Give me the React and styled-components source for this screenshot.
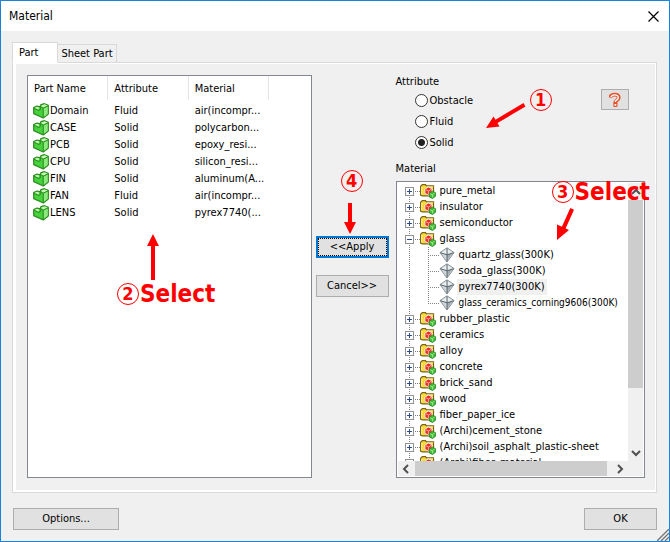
import { useState } from "react"
import styled, { createGlobalStyle, css } from "styled-components"

const parts = [
  { name: "Domain", attribute: "Fluid", material: "air(incompr..." },
  { name: "CASE", attribute: "Solid", material: "polycarbon..." },
  { name: "PCB", attribute: "Solid", material: "epoxy_resi..." },
  { name: "CPU", attribute: "Solid", material: "silicon_resi..." },
  { name: "FIN", attribute: "Solid", material: "aluminum(A..." },
  { name: "FAN", attribute: "Fluid", material: "air(incompr..." },
  { name: "LENS", attribute: "Solid", material: "pyrex7740(..." },
]

const materials = [
  { name: "pure_metal" },
  { name: "insulator" },
  { name: "semiconductor" },
  {
    name: "glass",
    children: [
      "quartz_glass(300K)",
      "soda_glass(300K)",
      "pyrex7740(300K)",
      "glass_ceramics_corning9606(300K)",
    ],
  },
  { name: "rubber_plastic" },
  { name: "ceramics" },
  { name: "alloy" },
  { name: "concrete" },
  { name: "brick_sand" },
  { name: "wood" },
  { name: "fiber_paper_ice" },
  { name: "(Archi)cement_stone" },
  { name: "(Archi)soil_asphalt_plastic-sheet" },
  { name: "(Archi)fiber_material" },
]

const PartIcon = () => (
  <svg width="16" height="16" viewBox="0 0 16 16" aria-hidden="true">
    <path d="M.7 4.6 4 3l3 .8L8 1.6 11.500.7l3.800 1.600v8.700L10.300 15 .7 10.600z" fill="#45d23c" stroke="#2c8a1e" strokeWidth="1.200" strokeLinejoin="round" />
    <path d="M7.600 3 11.400 1.300l3.500 1.400-4.400 2z" fill="#c4f5b4" />
    <path d="M1.300 4.900 4 3.700l2.600 1.100-1.200 1.800z" fill="#c4f5b4" />
    <path d="M10.600 5.400 14.700 3.400v7.300l-4.100 3.300z" fill="#8fe87f" />
    <path d="M10.200 5.200v9.400M7.300 3.400v3.400L5.400 7.400 1 5.200M7.300 3.400l2.900 1.800 4.900-2.400" fill="none" stroke="#2c8a1e" />
  </svg>
)

const FolderIcon = () => (
  <svg width="16" height="16" viewBox="0 0 16 16" aria-hidden="true">
    <path d="M.6 3.400 2.300 1.600h3.200l1 1.200h7v10H2.400L.6 12z" fill="#f5d93c" stroke="#7a6114" strokeWidth="1.200" />
    <path d="M7 3.900h6.200M1.700 4v7.400" fill="none" stroke="#fff3a0" />
    <path d="m4.900 6.300 3.400-2.300 3.700 1.600v4.200L8.600 12.200 4.900 10.400z" fill="#ea3328" stroke="#fff" strokeWidth=".8" />
    <path d="m5.900 6.900 2.700 1.200 2.600-1.700M8.600 8.300v3" fill="none" stroke="#ffb3a8" strokeWidth=".9" />
    <path d="m9.300 10.300 3-2.100 3.200 1.400v3.700l-3 2.200-3.200-1.500z" fill="#3fb932" stroke="#1f8a1c" strokeWidth=".8" />
    <path d="m10.100 10.800 2.300 1 2.300-1.600M12.400 11.900v2.500" fill="none" stroke="#c0f4b0" strokeWidth=".8" />
  </svg>
)

const GemIcon = () => (
  <svg width="16" height="16" viewBox="0 0 16 16" aria-hidden="true">
    <path d="M8 .8 15 5.600 8 15 1 5.600z" fill="#d3d9dc" stroke="#89939a" strokeLinejoin="round" />
    <path d="M8 1.800 13.600 5.600 8 7.600 2.400 5.600z" fill="#eceff0" />
    <path d="M8 7.800 13.600 6.200 8 13.800z" fill="#a3aeb4" />
    <path d="M1.400 5.700 8 7.800l6.600-2.100M8 1.200v13.400" fill="none" stroke="#59646a" />
  </svg>
)

const HelpIcon = () => (
  <svg width="12" height="16" viewBox="0 0 12 16" aria-hidden="true">
    <path d="M1.300 5.600C1.500 3.400 3.200 2.600 5.800 2.600s3.900 1.100 3.900 3.100c0 2.500-3.300 2.300-3.300 5.200" fill="none" stroke="#e4532c" strokeWidth="3.800" />
    <rect x="4.300" y="10.400" width="4.200" height="4.600" rx="1" fill="#e4532c" />
    <path d="M2 5C2.500 3.400 3.800 2.900 5.800 2.900s3.500 1 3.500 2.800c0 2.200-3 2.100-3 4.300" fill="none" stroke="#fff" strokeWidth="1.400" />
    <rect x="5.500" y="12" width="1.800" height="1.800" fill="#fff" />
  </svg>
)

const chevrons = {
  up: "M1 7 5 3l4 4",
  down: "M1 3l4 4 4-4",
  left: "M7 1 3 5l4 4",
  right: "M3 1l4 4-4 4",
}

const Chevron = ({ to }) => (
  <svg width="10" height="10" viewBox="0 0 10 10" aria-hidden="true">
    <path d={chevrons[to]} fill="none" stroke="#505050" strokeWidth="2" />
  </svg>
)

const TreeBranch = ({ name, items, first }) => {
  const [open, setOpen] = useState(Boolean(items))

  return (
    <li>
      <TreeRow>
        <Joint $first={first}>
          <Expander type="button" aria-label={name} aria-expanded={open} onClick={() => setOpen(!open)}>
            <svg width="9" height="9" viewBox="0 0 9 9">
              <path d={open ? "M2 4.5h5" : "M2 4.5h5M4.5 2v5"} stroke="#2b4a9a" />
            </svg>
          </Expander>
        </Joint>
        <FolderIcon />
        <TreeLabel>{name}</TreeLabel>
      </TreeRow>
      {open && items && (
        <TreeList>
          {items.map((item, i) => (
            <TreeRow as="li" key={item}>
              <Trunk />
              <Twig $last={i === items.length - 1} />
              <GemIcon />
              <TreeLabel $selected={item.startsWith("pyrex")} $small={item.length > 30}>{item}</TreeLabel>
            </TreeRow>
          ))}
        </TreeList>
      )}
    </li>
  )
}

const App = () => {
  const [attribute, setAttribute] = useState("Solid")

  return (
    <Dialog>
      <GlobalStyle />
      <TitleBar>
        <Title>Material</Title>
        <CloseButton type="button" aria-label="Close">
          <svg width="11" height="11" viewBox="0 0 11 11">
            <path d="M.5.5l10 10M10.5.5l-10 10" stroke="#000" strokeWidth="1.2" />
          </svg>
        </CloseButton>
      </TitleBar>

      <Content>
        <Tabs role="tablist">
          <Tab type="button" role="tab" aria-selected="true" $active>Part</Tab>
          <Tab type="button" role="tab" aria-selected="false">Sheet Part</Tab>
        </Tabs>

        <Panel>
          {/* Part list */}
          <PartList>
            <PartTable>
              <thead>
                <tr>
                  <HeadCell>Part Name</HeadCell>
                  <HeadCell>Attribute</HeadCell>
                  <HeadCell>Material</HeadCell>
                </tr>
              </thead>
              <tbody>
                {parts.map((part) => (
                  <tr key={part.name}>
                    <Cell $name>
                      <PartName><PartIcon />{part.name}</PartName>
                    </Cell>
                    <Cell>{part.attribute}</Cell>
                    <Cell>{part.material}</Cell>
                  </tr>
                ))}
              </tbody>
            </PartTable>
            <Arrow $left={118} $top={157} width="14" height="48" viewBox="0 0 14 48">
              <path d="M7 1 13 13H9V47H5V13H1z" />
            </Arrow>
            <Note $left={89} $top={202}><Step>2</Step>Select</Note>
          </PartList>

          {/* Move buttons */}
          <Actions>
            <Note $left={25} $top={95}><Step>4</Step></Note>
            <Arrow $left={27} $top={127} width="14" height="34" viewBox="0 0 14 34">
              <path d="M5 1H9V20H13L7 32 1 20H5z" />
            </Arrow>
            <Button type="button" $focused>&lt;&lt;Apply</Button>
            <Button type="button">Cancel&gt;&gt;</Button>
          </Actions>

          {/* Attribute and material tree */}
          <Side>
            <SideTop>
              <Group>
                <Legend>Attribute</Legend>
                {["Obstacle", "Fluid", "Solid"].map((value) => (
                  <RadioLabel key={value}>
                    <Radio
                      type="radio"
                      name="attribute"
                      checked={attribute === value}
                      onChange={() => setAttribute(value)}
                    />
                    {value}
                  </RadioLabel>
                ))}
              </Group>
              <HelpButton type="button" aria-label="Help"><HelpIcon /></HelpButton>
            </SideTop>
            <TreeTitle id="tree-title">Material</TreeTitle>
            <TreeBox>
              <TreeView aria-labelledby="tree-title">
                {materials.map((m, i) => (
                  <TreeBranch key={m.name} name={m.name} items={m.children} first={i === 0} />
                ))}
              </TreeView>
              <ScrollBar $vertical>
                <ScrollButton type="button" aria-label="Scroll up"><Chevron to="up" /></ScrollButton>
                <Thumb $size={188} />
                <Track $size={56} />
                <ScrollButton type="button" aria-label="Scroll down"><Chevron to="down" /></ScrollButton>
              </ScrollBar>
              <ScrollBar>
                <ScrollButton type="button" aria-label="Scroll left"><Chevron to="left" /></ScrollButton>
                <Thumb $size={191} />
                <Track $size={4} />
                <ScrollButton type="button" aria-label="Scroll right"><Chevron to="right" /></ScrollButton>
              </ScrollBar>
              <Corner />
            </TreeBox>
            <Note $left={134} $top={14}><Step>1</Step></Note>
            <Arrow $left={89} $top={27} width="42" height="30" viewBox="0 0 42 30">
              <path d="M38.5 1 40.5 4.5 12.500 21 14.500 24.500 1 26 8.500 14.500 10.500 17.700z" />
            </Arrow>
            <Note $left={156} $top={101}><Step>3</Step>Select</Note>
            <Arrow $left={160} $top={132} width="20" height="34" viewBox="0 0 20 34">
              <path d="M14.300 1 18 2.700 9.600 21.500 13 23 1 33V17.500L5.900 19.800z" />
            </Arrow>
          </Side>
        </Panel>

        <Footer>
          <Button type="button" $wide>Options...</Button>
          <Button type="button">OK</Button>
        </Footer>
      </Content>
      <Grip width="12" height="12" viewBox="0 0 12 12" aria-hidden="true">
        <path d="M0 12 12 0M4 12l8-8M8 12l4-4" stroke="#777" strokeWidth="1.4" />
      </Grip>
    </Dialog>
  )
}

const GlobalStyle = createGlobalStyle`
  * {
    box-sizing: border-box;
  }

  body {
    margin: 0;
    color: #000;
    font: 11px/14px "DejaVu Sans Condensed", "DejaVu Sans", sans-serif;
  }

  button {
    padding: 0;
    color: inherit;
    font: inherit;
  }

  svg {
    display: block;
    flex: none;
  }
`

const Dialog = styled.main`
  position: relative;
  display: flex;
  flex-direction: column;
  height: 100vh;
  min-height: 400px;
  border: 1px solid #1883d7;
  background: #f0f0f0;
`

const TitleBar = styled.header`
  display: flex;
  align-items: center;
  justify-content: space-between;
  height: 30px;
  padding: 0 10px 0 8px;
  background: #fff;
`

const Title = styled.h1`
  margin: 0;
  font-size: 12px;
  font-weight: normal;
`

const CloseButton = styled.button`
  border: none;
  background: none;
`

const Content = styled.div`
  display: flex;
  flex: 1;
  flex-direction: column;
  min-height: 0;
  padding: 11px 12px 11px 11px;
`

const Tabs = styled.div`
  display: flex;
  align-items: flex-end;
  height: 21px;
  margin-bottom: -1px;
  z-index: 1;
`

const Tab = styled.button`
  width: 59px;
  height: 19px;
  border: 1px solid #d9d9d9;
  border-left: none;
  background: #f0f0f0;
  white-space: nowrap;

  ${({ $active }) => $active && css`
    width: 46px;
    height: 21px;
    padding: 0 10px 0 8px;
    border-left: 1px solid #d9d9d9;
    border-bottom-color: #fff;
    background: #fff;
    text-align: left;
    padding-left: 6px;
  `}
`

const Panel = styled.section`
  display: flex;
  flex: 1;
  min-height: 0;
  padding: 12px 11px 14px 14px;
  border: 1px solid #d9d9d9;
  box-shadow: inset 3px 1px 0 #fff, inset -1px -2px 0 #fff;
`

const PartList = styled.div`
  position: relative;
  flex: 285 1 284px;
  border: 1px solid #828790;
  background: #fff;
`

const PartTable = styled.table`
  width: 241px;
  table-layout: fixed;
  border-collapse: separate;
  border-spacing: 0;
`

const HeadCell = styled.th`
  height: 26px;
  padding: 0 0 0 6px;
  background: linear-gradient(#e5e5e5, #e5e5e5) right top / 1px 24px no-repeat;
  font-weight: normal;
  text-align: left;
`

const Cell = styled.td`
  height: 17px;
  padding: 0 0 0 ${({ $name }) => ($name ? 5 : 6)}px;
  white-space: nowrap;
`

const PartName = styled.span`
  display: flex;
  align-items: center;
  gap: 1px;
`

const Actions = styled.div`
  position: relative;
  display: flex;
  flex-direction: column;
  gap: 17px;
  margin: 0 7px 0 4px;
  padding-top: 161px;
`

const Button = styled.button`
  width: ${({ $wide }) => ($wide ? 106 : 73)}px;
  height: 22px;
  border: 1px solid #adadad;
  background: #e1e1e1;

  ${({ $focused }) => $focused && css`
    border: 2px solid #0078d7;
    outline: 1px dotted #000;
    outline-offset: -3px;
  `}
`

const Side = styled.div`
  position: relative;
  display: flex;
  flex: 249 1 249px;
  flex-direction: column;
  min-width: 0;
`

const SideTop = styled.div`
  display: flex;
  justify-content: space-between;
  align-items: flex-start;
`

const Group = styled.fieldset`
  margin: 0;
  padding: 0;
  border: none;
`

const Legend = styled.legend`
  padding: 0 0 1px;
`

const RadioLabel = styled.label`
  display: flex;
  align-items: center;
  gap: 2px;
  height: 21px;
  padding-left: 19px;
`

const Radio = styled.input`
  appearance: none;
  width: 13px;
  height: 13px;
  margin: 0;
  border: 1px solid #333;
  border-radius: 50%;
  background: #fff;

  &:checked {
    background: radial-gradient(circle, #222 0 3px, #fff 4px);
  }
`

const HelpButton = styled.button`
  display: grid;
  place-items: center;
  width: 28px;
  height: 21px;
  margin: 14px 16px 0 0;
  border: 1px solid #adadad;
  background: #e1e1e1;
`

const TreeTitle = styled.h2`
  margin: 9px 0 5px;
  font-size: 11px;
  font-weight: normal;
`

const TreeBox = styled.div`
  display: grid;
  flex: 1;
  grid-template-columns: minmax(0, 1fr) 15px;
  grid-template-rows: minmax(0, 1fr) 15px;
  min-height: 0;
  padding: 1px;
  border: 1px solid #828790;
  background: #fff;
`

const TreeList = styled.ul`
  margin: 0;
  padding: 0;
  list-style: none;
`

const TreeView = styled(TreeList)`
  overflow: hidden;
  padding-left: 7px;
`

const TreeRow = styled.div`
  display: flex;
  align-items: center;
  height: 16px;
`

const dotsDown = "repeating-linear-gradient(#808080 0 1px, transparent 1px 2px)"
const dotsAcross = "repeating-linear-gradient(90deg, #808080 0 1px, transparent 1px 2px)"

const Joint = styled.span`
  display: flex;
  flex: none;
  align-items: center;
  width: 15px;
  height: 16px;
  background:
    ${dotsDown} 4px ${({ $first }) => ($first ? "8px" : "0")} / 1px 100% no-repeat,
    ${dotsAcross} 10px 8px / 5px 1px no-repeat;
`

const Expander = styled.button`
  width: 9px;
  height: 9px;
  border: none;
  outline: 1px solid #919191;
  outline-offset: -1px;
  background: #fff;
`

const Trunk = styled.span`
  flex: none;
  width: 23px;
  height: 16px;
  background: ${dotsDown} 4px 0 / 1px 100% no-repeat;
`

const Twig = styled.span`
  flex: none;
  width: 11px;
  height: 16px;
  background:
    ${dotsDown} 0 0 / 1px ${({ $last }) => ($last ? "8px" : "100%")} no-repeat,
    ${dotsAcross} 0 8px / 11px 1px no-repeat;
`

const TreeLabel = styled.span`
  margin-left: 2px;
  padding: 0 2px;
  font-size: ${({ $small }) => ($small ? 10 : 11)}px;
  white-space: nowrap;
  line-height: 16px;
  background: ${({ $selected }) => ($selected ? "#f0f0f0" : "none")};
`

const ScrollBar = styled.div`
  display: flex;
  flex-direction: ${({ $vertical }) => ($vertical ? "column" : "row")};
  background: #f0f0f0;
`

const ScrollButton = styled.button`
  display: grid;
  flex: 0 0 17px;
  place-items: center;
  border: none;
  background: none;
`

const Track = styled.div`
  flex: ${({ $size }) => $size} 1 0;
`

const Thumb = styled(Track)`
  background: #cdcdcd;
`

const Corner = styled.div`
  background: #f0f0f0;
`

const Footer = styled.footer`
  display: flex;
  justify-content: space-between;
  margin-top: 15px;
  padding-left: 1px;
`

const Note = styled.strong`
  position: absolute;
  left: ${({ $left }) => $left}px;
  top: ${({ $top }) => $top}px;
  display: flex;
  align-items: center;
  gap: 1px;
  color: #f00;
  font-size: 24px;
  line-height: 32px;
  pointer-events: none;
`

const Step = styled.span`
  width: 22px;
  height: 22px;
  border: 1px solid #f00;
  border-radius: 50%;
  font-size: 18px;
  line-height: 20px;
  text-align: center;
`

const Arrow = styled.svg`
  position: absolute;
  left: ${({ $left }) => $left}px;
  top: ${({ $top }) => $top}px;
  fill: #f00;
  pointer-events: none;
`

const Grip = styled.svg`
  position: absolute;
  right: 0;
  bottom: 0;
`

export default App
